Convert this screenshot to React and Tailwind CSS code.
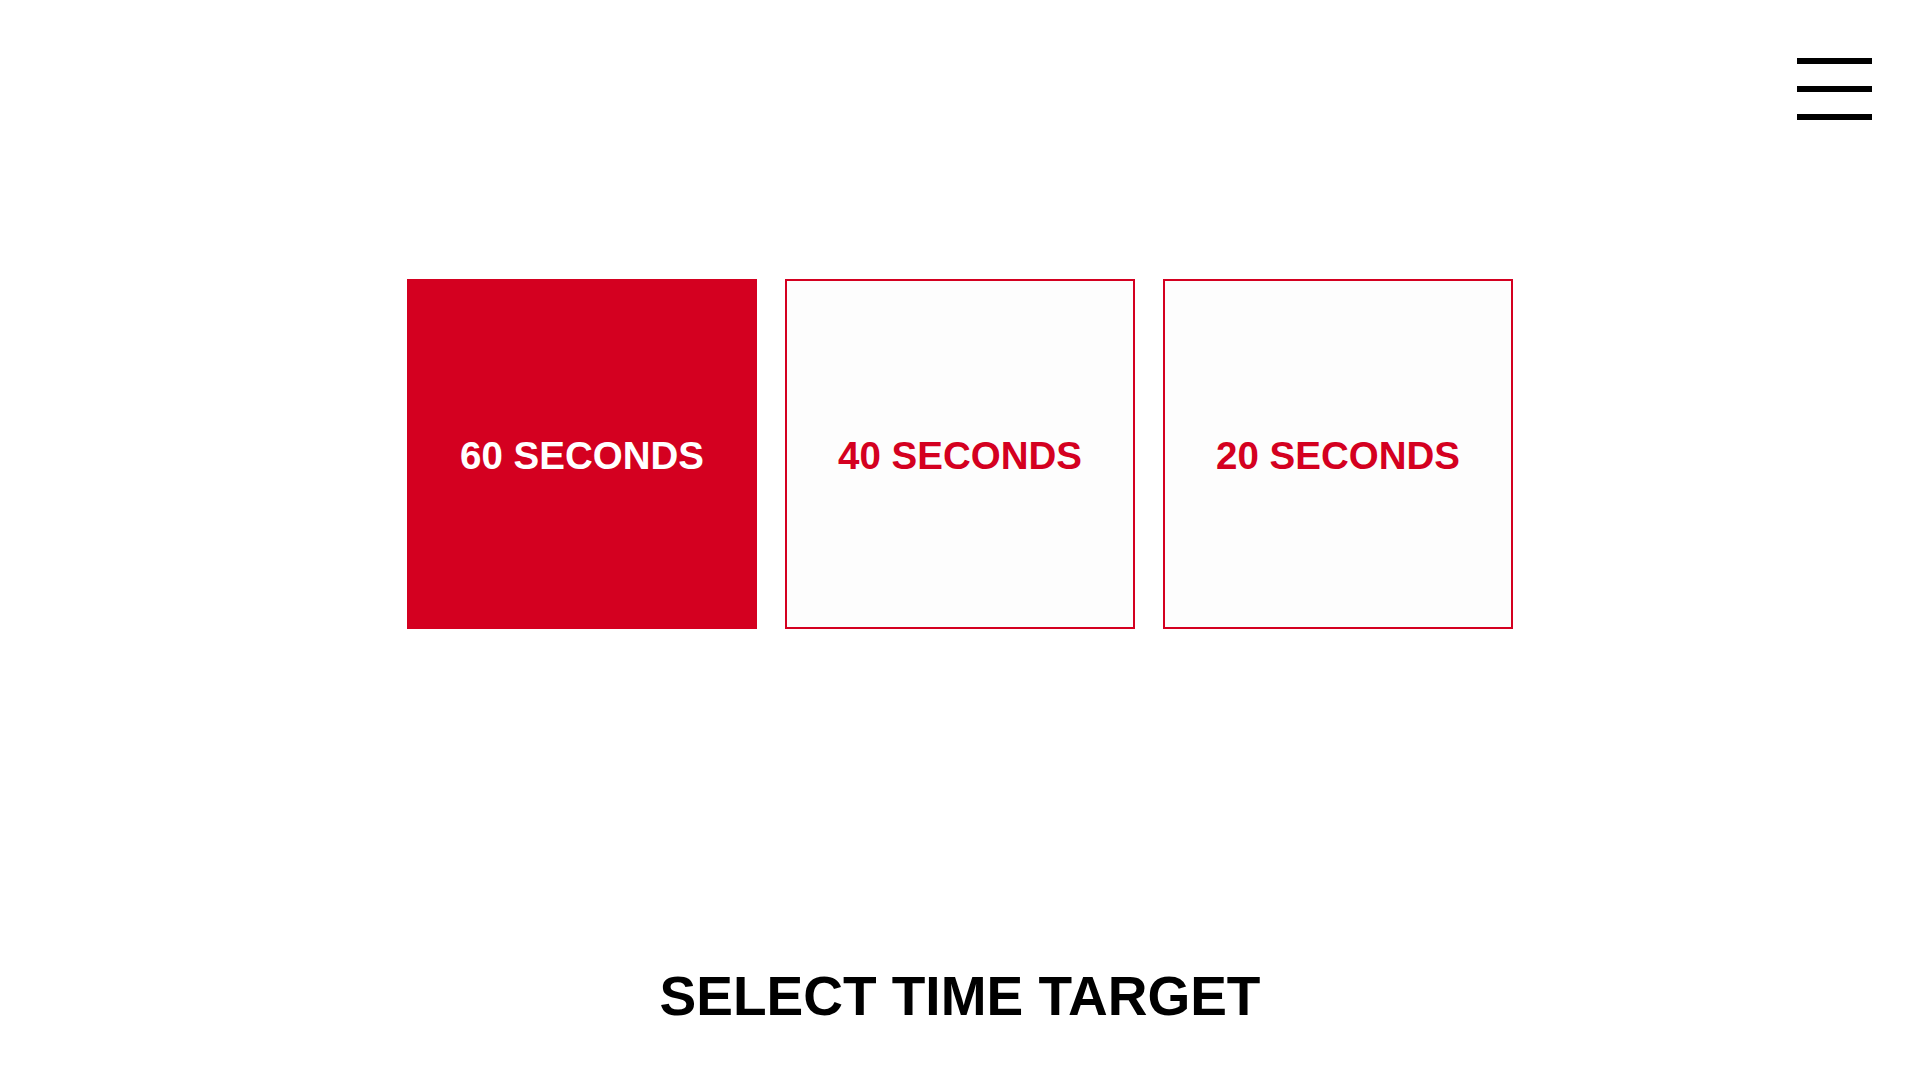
import { useState } from "react"

// Time target picker: three square options, selected one filled red
const options = [60, 40, 20]

function MenuButton() {
  return (
    <button className="flex flex-col gap-[22px] w-[75px]" aria-label="Menu">
      <span className="block h-[6px] w-full bg-black" />
      <span className="block h-[6px] w-full bg-black" />
      <span className="block h-[6px] w-full bg-black" />
    </button>
  )
}

export default function App() {
  const [selected, setSelected] = useState(60)

  return (
    <div className="min-h-screen w-full bg-white font-['Liberation_Sans',Arial,sans-serif] flex flex-col">
      {/* Header */}
      <header className="flex justify-end pt-[58px] pr-[48px]">
        <MenuButton />
      </header>

      {/* Options */}
      <div className="flex justify-center gap-[28px] mt-[159px]">
        {options.map((s) => (
          <button
            key={s}
            onClick={() => setSelected(s)}
            className={
              s === selected
                ? "w-[350px] h-[350px] flex items-center justify-center bg-[#d40020] text-white text-[38.5px] font-bold pt-[3px]"
                : "w-[350px] h-[350px] flex items-center justify-center bg-[#fdfdfd] border-2 border-[#d40020] text-[#d40020] text-[38.5px] font-bold pt-[3px]"
            }
          >
            {s} SECONDS
          </button>
        ))}
      </div>

      {/* Title */}
      <h1 className="mt-[340px] text-center text-[55px] leading-none font-bold text-black">
        SELECT TIME TARGET
      </h1>
    </div>
  )
}
